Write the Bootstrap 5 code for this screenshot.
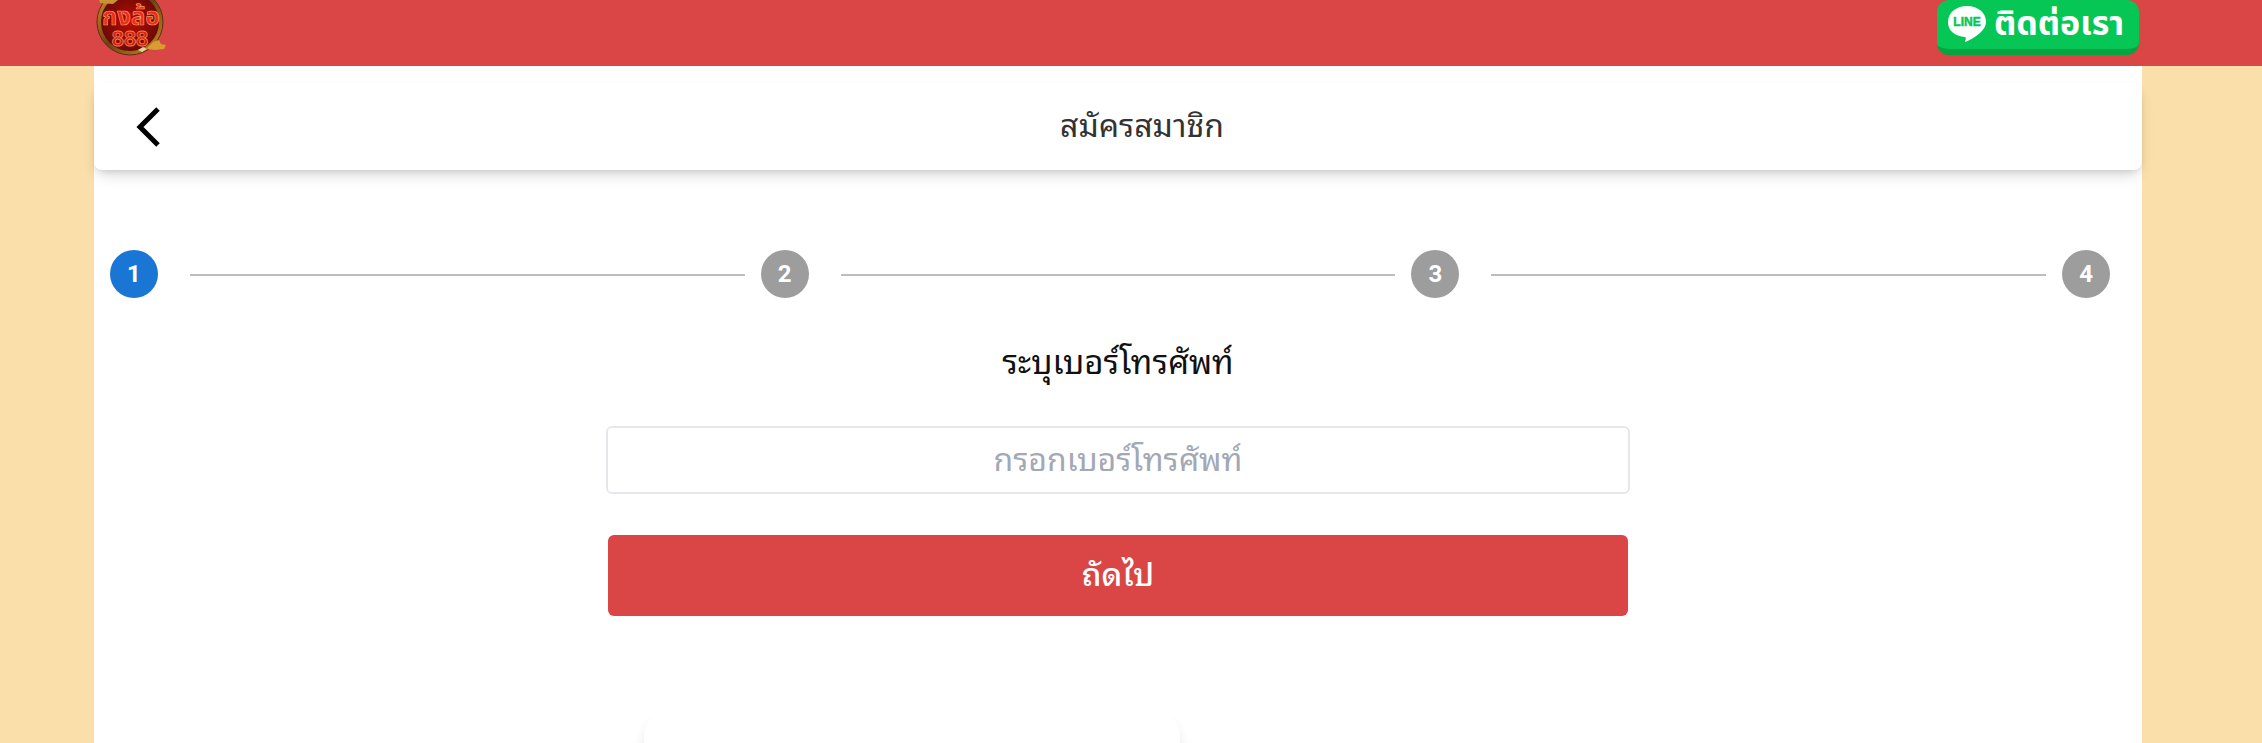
<!DOCTYPE html>
<html lang="th">
<head>
<meta charset="utf-8">
<meta name="viewport" content="width=device-width, initial-scale=1">
<title>สมัครสมาชิก</title>
<link href="https://cdn.jsdelivr.net/npm/bootstrap@5.3.0/dist/css/bootstrap.min.css" rel="stylesheet">
<style>
  body { background: #fbdfaa; font-family: "Noto Sans Thai Looped", Sarabun, Loma, Garuda, Waree, "Noto Sans", sans-serif; }
  .topbar { background: #d94645; height: 66px; padding-left: 94px; padding-right: 123px; }
  .brand-link { height: 58px; }
  .contact-btn { background: #06c755; border: 0; border-bottom: 6px solid #05a342; border-radius: 12px; color: #fff; width: 202px; height: 55px; padding: 0 0 2px 11px; font-family: "Noto Sans", "Noto Sans Thai", sans-serif; font-size: 34px; font-weight: 700; line-height: 40px; }
  .page-wrap { padding-left: 94px; padding-right: 120px; }
  .panel { background: #fff; height: calc(100vh - 66px); padding-top: 17px; overflow-x: visible; overflow-y: clip; }
  .title-card { background: #fff; border-radius: 8px; height: 87px; padding: 0 42px; box-shadow: 0 8px 16px -4px rgba(0,0,0,.16), 0 3px 6px -2px rgba(0,0,0,.12); }
  .title-card h1 { font-size: 32px; line-height: 44px; color: #333; padding: 0 0 8px 24px; }
  .back-btn { width: 24px; height: 40px; }
  .stepper { padding: 80px 32px 0 16px; }
  .step-dot { width: 48px; height: 48px; background: #9d9d9d; color: #fff; font: 700 24px/48px Roboto, sans-serif; }
  .step-dot.active { background: #1976d5; }
  .step-line { height: 2px; background: #bdbdbd; margin: 1px 16px 0 32px; }
  .signup { width: 50%; padding-top: 38px; }
  .signup label { font-size: 33px; line-height: 48px; color: #111; }
  .signup .form-control { height: 68px; border: 2px solid #e5e7eb; border-radius: 6px; padding: 0 12px 8px; font-size: 32px; color: #333; margin-top: 42px; }
  .signup .form-control::placeholder { color: #a2a8b5; }
  .signup .btn { height: 81px; margin: 41px 2px 0; padding: 0 12px 8px; background: #d94645; color: #fff; border: 0; border-radius: 6px; font-size: 32px; font-weight: 500; }
  .footer-card { width: 536px; height: 120px; margin: 96px 0 0 550px; border-radius: 24px; background: #fff; box-shadow: 0 8px 12px rgba(0,0,0,.10); }
</style>
</head>
<body>
<header class="topbar d-flex justify-content-between align-items-start">
  <a href="#" class="brand-link" aria-label="กงล้อ 888">
    <svg width="74" height="58" viewBox="0 0 74 58">
      <defs>
        <radialGradient id="disc"><stop offset="0" stop-color="#c00a05"/><stop offset="1" stop-color="#650b04"/></radialGradient>
        <linearGradient id="gold" x1="0" y1="0" x2="1" y2="1"><stop offset="0" stop-color="#d6952c"/><stop offset=".5" stop-color="#704012"/><stop offset="1" stop-color="#c78b26"/></linearGradient>
      </defs>
      <circle cx="36" cy="22" r="31" fill="url(#disc)" stroke="url(#gold)" stroke-width="4"/>
      <circle cx="36" cy="22" r="33" fill="none" stroke="#57300f" stroke-width="1"/>
      <path d="M5 0h19l-5 4-13-1z" fill="#c99334"/>
      <path d="M54 47l5-5 6-2 2 4 5 1-2 4-9 1-8-1z" fill="#d89c31"/>
      <path d="M44 50l5-3 4 2-5 3z" fill="#e6cf9b"/>
      <text x="37" y="25" text-anchor="middle" font-family="Noto Sans, Noto Sans Thai, sans-serif" font-size="24" font-weight="700" fill="#f62618" stroke="#e6a16b" stroke-width=".7">กงล้อ</text>
      <text x="36" y="46" text-anchor="middle" font-family="Liberation Sans, sans-serif" font-size="22" font-weight="700" fill="#e01b10" stroke="#dc8a55" stroke-width=".8">888</text>
    </svg>
  </a>
  <button type="button" class="contact-btn d-flex align-items-center gap-2">
    <svg class="flex-shrink-0" width="38" height="38" viewBox="0 0 38 38" aria-hidden="true">
      <path d="M19 1C9 1 0 7 0 17c0 9 7 14 17 15 2 1 0 3 0 5 8-3 21-11 21-20C38 7 29 1 19 1z" fill="#fff"/>
      <text x="19" y="21" text-anchor="middle" font-family="Liberation Sans, sans-serif" font-size="12" font-weight="700" fill="#06c755" stroke="#06c755" stroke-width=".5">LINE</text>
    </svg>
    <span class="text-nowrap pb-1">ติดต่อเรา</span>
  </button>
</header>
<div class="page-wrap">
  <main class="panel">
    <div class="title-card d-flex align-items-center">
      <button type="button" class="back-btn btn p-0 border-0 d-flex" aria-label="ย้อนกลับ">
        <svg width="24" height="40" viewBox="0 0 24 40" fill="none" stroke="#000" stroke-width="5"><path d="M22 2L4 20l18 18"/></svg>
      </button>
      <h1 class="flex-fill text-center fw-normal m-0">สมัครสมาชิก</h1>
    </div>
    <div class="stepper d-flex align-items-center">
      <span class="step-dot active rounded-circle text-center flex-shrink-0">1</span>
      <span class="step-line flex-fill"></span>
      <span class="step-dot rounded-circle text-center flex-shrink-0">2</span>
      <span class="step-line flex-fill"></span>
      <span class="step-dot rounded-circle text-center flex-shrink-0">3</span>
      <span class="step-line flex-fill"></span>
      <span class="step-dot rounded-circle text-center flex-shrink-0">4</span>
    </div>
    <form class="signup mx-auto d-flex flex-column">
      <label for="phone" class="text-center">ระบุเบอร์โทรศัพท์</label>
      <input type="tel" id="phone" class="form-control text-center" placeholder="กรอกเบอร์โทรศัพท์">
      <button type="button" class="btn">ถัดไป</button>
    </form>
    <div class="footer-card"></div>
  </main>
</div>
<script src="https://cdn.jsdelivr.net/npm/bootstrap@5.3.0/dist/js/bootstrap.bundle.min.js"></script>
</body>
</html>
